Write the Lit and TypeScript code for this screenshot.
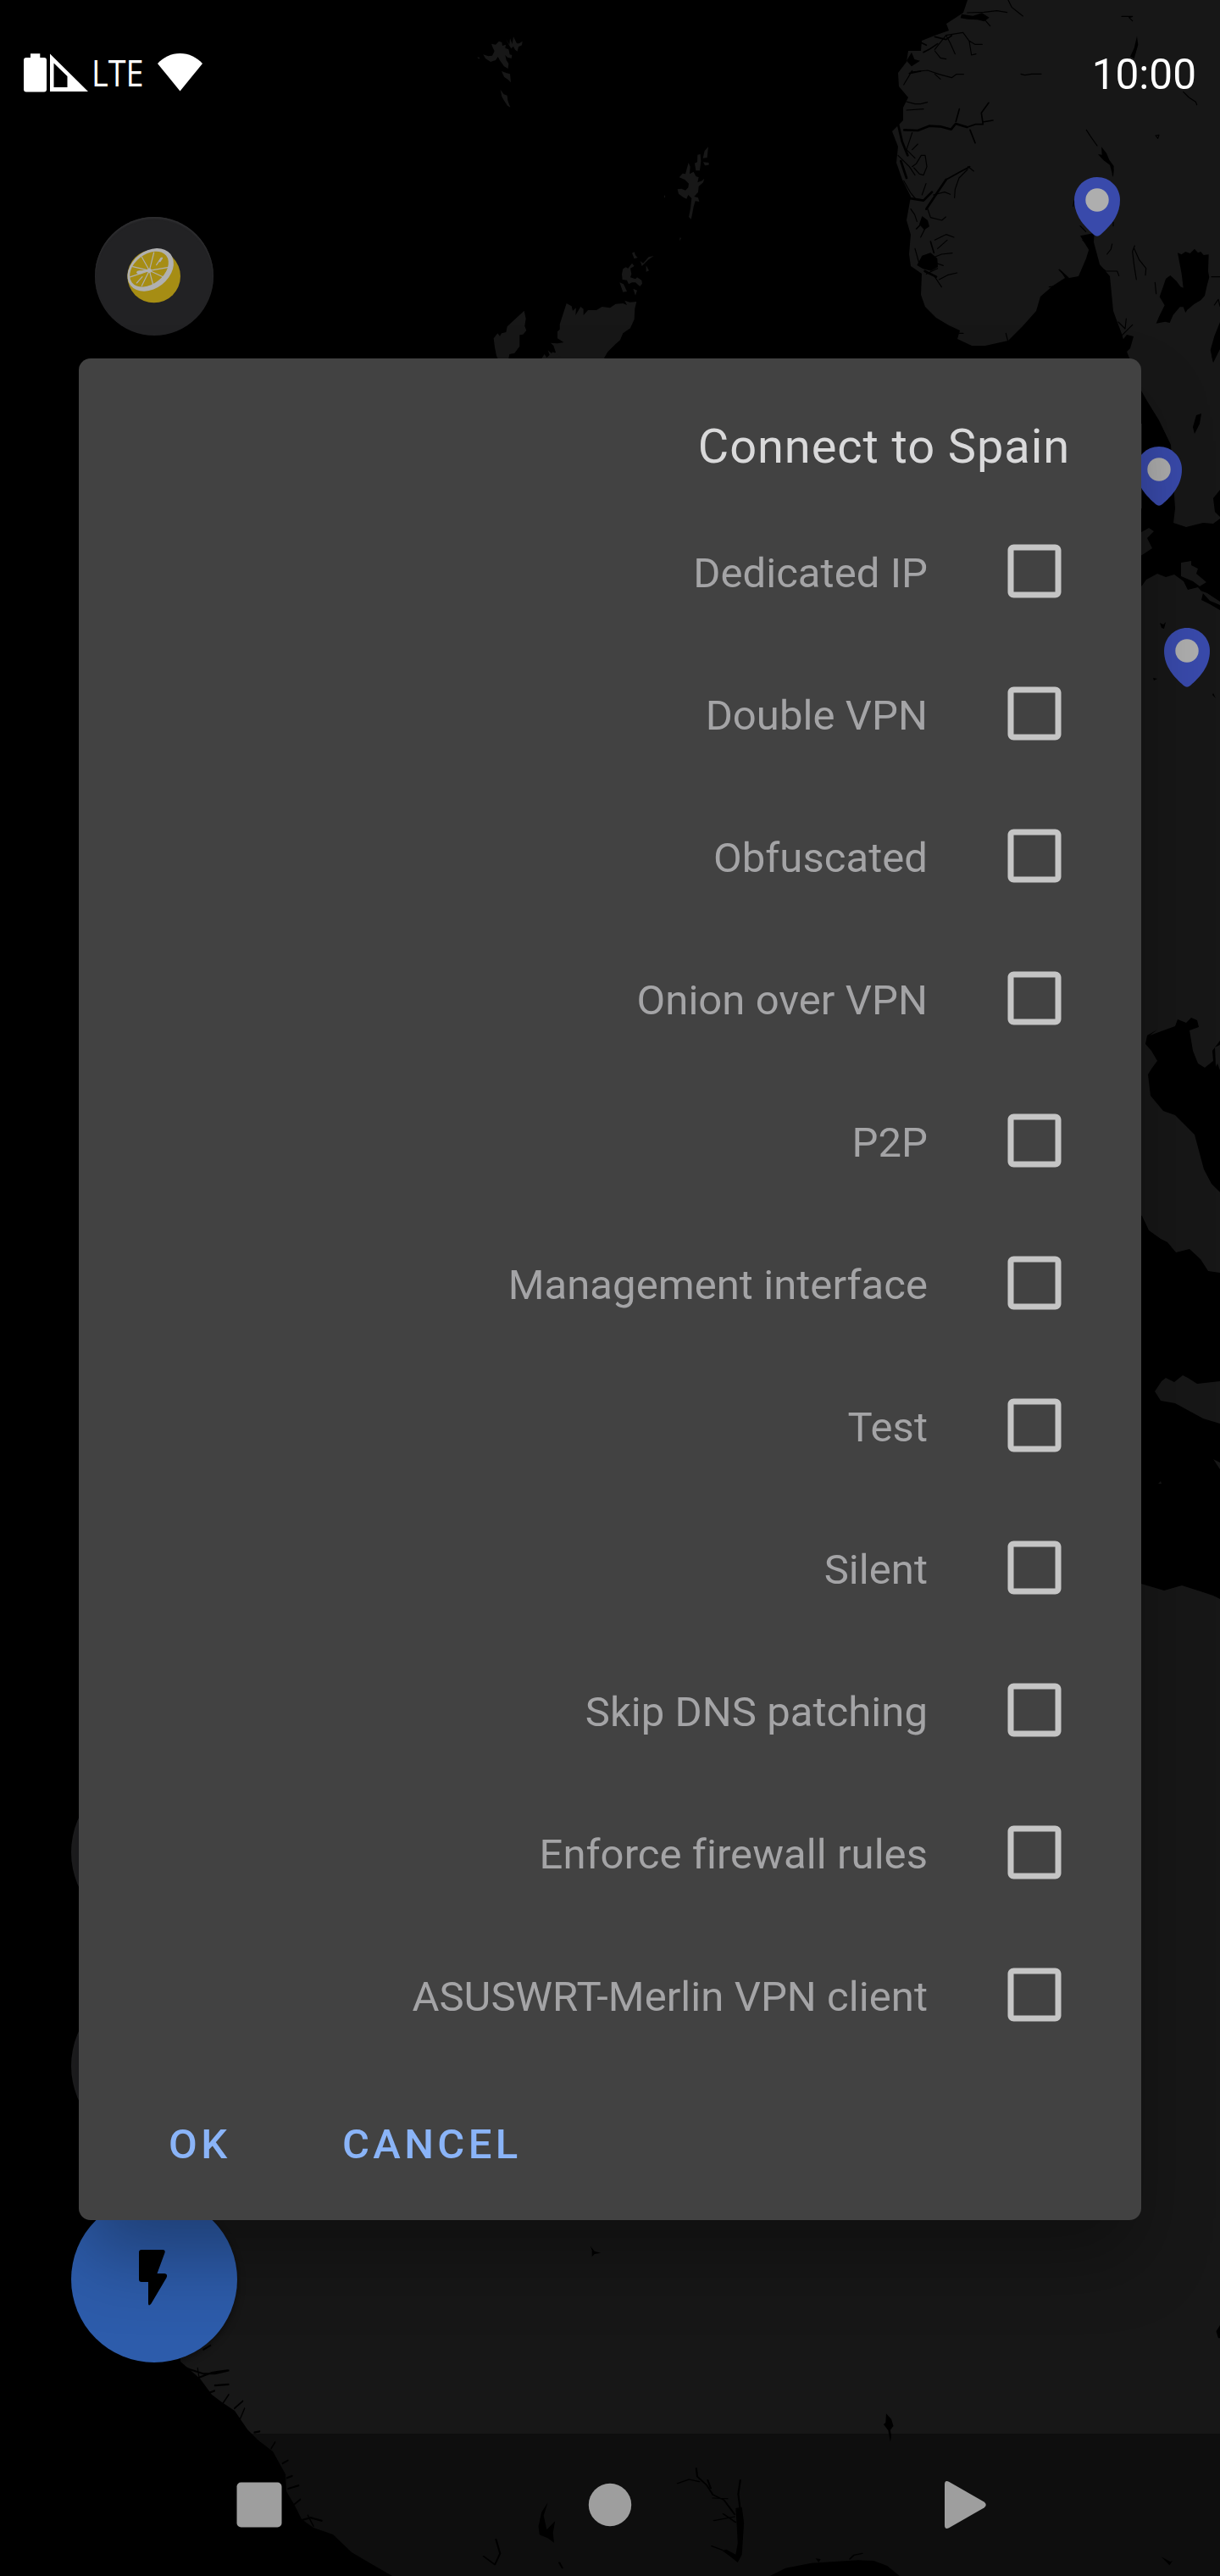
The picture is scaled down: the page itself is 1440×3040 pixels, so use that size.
import { LitElement, html, svg, css } from 'lit';
import { customElement, state } from 'lit/decorators.js';

interface Pin { x: number; y: number; }

const OPTIONS: string[] = [
  'Dedicated IP',
  'Double VPN',
  'Obfuscated',
  'Onion over VPN',
  'P2P',
  'Management interface',
  'Test',
  'Silent',
  'Skip DNS patching',
  'Enforce firewall rules',
  'ASUSWRT-Merlin VPN client',
];

// Pin positions: centre of the round head.
const PINS: Pin[] = [
  { x: 1295, y: 236 },
  { x: 1368, y: 554 },
  { x: 1401, y: 768 },
];

@customElement('world-map')
class WorldMap extends LitElement {
  static styles = css`
    :host { display: block; }
    .map { display: block; width: 1440px; height: 3040px; }
    .land { fill: #171717; }
    .sea { fill: #000; }
    .fjord { fill: none; stroke: #000; stroke-linecap: round; stroke-linejoin: round; }
    .pin { fill: #394aab; }
    .eye { fill: #aeaeae; }
  `;

  render() {
    return html`
      <svg class="map" viewBox="0 0 1440 3040">
        <g transform="translate(500 0) scale(.33333)">
          <path class="land" d="M240 155l15 3 12-12 10 4 2 12 12-4-2 12 12 5 4 18 8 2-2 12-14-4-8-8 4 18 8 12-2 18-14-8-14-20-8-14-8 12-18 6-18-12-8-14 18 6 14-2 8-16-6-12zM290 136l14 22 2-22 8 20 4-26 12 24 8 0 12-8-2 14-12 6-4 16-8-6-6-12-8 8-6-10zM190 202l9 2-4 5zM276 252l16 6 14 4 3 30-10-10-14-10zM272 318l12 16 12 4 2 18 9 24-10-6-12-18-8-14z" />
          <path class="land" d="M1008 520l-4 38-15 2 6-26zM970 548l10-2 2 24-4 34-14 0-4-26 9-4zM990 574l20 2 0 8-14 2zM938 576l6 14-2 26 14-8 8 16 10 4-4 18 16-6 8-8-4 14-16 14-2 20-14 16 14 4 4 14-14-2-6 20-6 32-3 12-8-8 6-30 4-36-12-12-6 14-12-6-16-12-4-16 14-2 14 6 10-10 2-14-14-14-20-8 12-14 10 2zM852 690l4 6-4 5zM908 840l4 4-6 9z" />
          <path class="land" d="M738 896l8-4 4 12 8 8-12 4zM815 906l-20 14-22 22-6-18 10 8 20-22zM788 940l10 18-10 4zM738 932l8 10-14 8 4 20-4 12 18 6 6-6 16 10 2 12-8 10-16-14-12 0-12 6-6-14-16-2-2-20 4-18 10-6 8 4zM694 1000l14 6 12 26-14 2zM742 1022l14 6-6 18z" />
          <path class="land" d="M506 1074l18 10 4 16 12-10-2 26 18-30 10 8 0 22 16-18 30 0 20-12 28 4 20-14 26-2 14 6-8-16 18 6 24-2-6 24-2 38-14 32-26 18-10 24-16 14-28 28-12 20 2 12-10 20-150 10-12-28-22-18-8-22 14 12 14-4-8-24-10-10 24 2 22-4-22-14 0-24 8-8 0-18z" />
          <path class="land" d="M356 1100l6 28-4 26 6 16-12 14-12 2 0 40-18 24-18 4-4 20-32 6-10-20-6-30-4-32 14-18 8 10 6-10 16-4 4-20zM410 1280l18-26 8 12 22-20 30 20 12 14z" />
        </g>
        <path class="land" d="M1142 0L1137 15 1117 28 1120 36 1103 42 1088 48 1087 60 1072 60 1070 73 1060 86 1061 102 1072 115 1066 127 1066 142 1053 155 1060 173 1058 192 1065 212 1075 232 1070 260 1075 277 1073 300 1075 314 1088 323 1087 348 1092 362 1105 375 1120 384 1133 390 1130 400 1147 408 1163 408 1190 402 1207 385 1223 367 1228 350 1243 337 1257 328 1250 317 1262 328 1273 326 1282 305 1286 292 1277 283 1290 282 1298 312 1310 326 1314 367 1324 394 1330 415 1336 430 1347 461 1355 475 1368 496 1382 525 1387 600 1385 617 1400 622 1420 617 1432 618 1440 612V0z" />
        <path class="land" d="M1340 500l8 0 0 100-8 0zM1340 632l16-9 6 4-8 8 6 12-12 8-8 3zM1394 664l12-2 0 5 8 4-2 6 12 10-8 5-8-6-14-6z" />
        <path class="land" d="M1336 700L1348 691 1353 684 1366 677 1376 681 1386 678 1397 686 1402 696 1414 693 1420 700 1418 708 1428 713 1440 720V1502L1426 1500 1417 1486 1404 1474 1388 1478 1378 1466 1370 1462 1356 1452 1348 1435 1336 1428z" />
        <path class="land" d="M1417 697l8 3 15 10v4l-12-5zM1363 1642l8-12 5-4 10 5 10-8 6 3 11 7 27-3v50l-20-6-33-18-17-3zM1432 1722l8 4v8zM1370 1748l-3 3 4 0z" />
        <path class="land" d="M1336 1864L1347 1869 1374 1877 1395 1871 1417 1878 1432 1883 1440 1887V3040H463L437 3025 415 3012 393 2991 370 2983 356 2973 348 2957 338 2940 337 2920 322 2893 305 2880 292 2867 277 2845 262 2835 250 2826 236 2807 213 2787 213 2620z" />
        <path class="sea" d="M1440 1228L1431 1240 1432 1252 1422 1260 1414 1255 1408 1240 1404 1216 1415 1212 1413 1204 1406 1201 1400 1207 1390 1203 1387 1211 1357 1222 1366 1215 1354 1222 1352 1232 1359 1240 1366 1252 1360 1260 1355 1268 1358 1293 1373 1311 1387 1316 1403 1332 1410 1339 1421 1380 1430 1397 1440 1407z" />
        <path class="land" d="M1434 1236l6-3v30l-3-8-2 4z" />
        <path class="sea" d="M1440 578l-8 10 2 16 6 6zM1354 606l12-4 5-10 7 5 8 4-3 10-14 8-17-5zM1430 420l8-20 2-4 0 16-8 16zM1322 405l8-10 8 2-4 14-8 8zM1412 490l6-2-2 12-6 12-2-8zM1369 735l4 2 3-3-2 8-3-1zM1361 800l5 1-4 2zM1432 818l3 6-4-4z" />
        <g transform="translate(960 0) scale(.33333)">
          <path class="sea" d="M1290 895l14 6 14-10 16 6 16-16 12 14 10-4 10 12 18-2-2 60 4 20-8 30-8 36-14 16-24 14-24 20-6 10-8-20-12 0-24 28-12 28-16-4-32 6 10-24 20-40-18-30 14-40 8-24 16-12 22 20 14 20 10 4-6-50zM525 50l40 6 32-10 26 16-18 14-24-6-34-2-26-4zM330 215l18-30 10 25 20 5-30 20zM1110 1200l16 8-12 10-16-4zM385 905l30-10 24 20 2 30-24 14-30-8-20-12zM385 765l20 15 6 22-18 12-18-20zM945 835l50-10-4 60 18 55 10 30-60-10 20-70zM1440 1140l-20 50-14 50 10 42 14-40 10-40zM1020 520l18 22 10 24 16 22-2 40-12-44-22-16-20-22 14 2zM1146 128l4 30-14 50-14-8 14-30z" />
          <path class="fjord" stroke-width="3.500" d="M690 0l12 25 40 32M545 45l60-2 45-5 36 6M600 62l26 30M430 175l40-50 60-10 22 30 8 50 16-4M552 145l20 12 26 0M470 125l14 26 18 40M430 180l20 25 20 4M345 255l60-6 40 14 45 12 16-12 26 0M320 300l30-50M430 262l20 18M330 360l30 8 20 0 24-6M330 390l60-4M500 700l2-30 14-40 30-30M350 590l14-10 18-30 14 0 6 40-12 30-14-4-20-22M300 550l40 40 20 30M320 640l24 42 20 24M385 690l14-40M425 690l40-10 20 8M345 740l14 20 8 24M405 740l10 30 40 10 14-12M400 800l-20 40M430 850l40-20 28 10M440 880l34-30M430 910l24-10 38-4M430 930l30 10M400 970l40-20M445 990l30-16 34-8M430 980l24 36M360 880l14 50M1010 940l26 20 40 0 6 16M1040 900l14-18 4-18M1062 800l0-14M945 800l20 20M1060 620l2-20M920 730l4-20M735 262l14 4 24-4 34 0M1310 325l20 20 24 16 4 10M1092 58l38 0-12 4 12 12M967 460l14 22 24 34M1212 480l12-2-4 12zM1138 870l-8 20 6 50 8 50M1136 880l18 40 24 30-2 24M1210 1000l4 40M1440 980l-30 0M1420 1080l14-20 6 24M1080 1140l24 24 4-36M1090 1190l40-40M870 955l20 20M835 1016l30-4M682 1180l6 24M505 1180l26 0M350 470l-20 60 30 30M370 510l-20 20M548 590l20 16" />
          <path class="fjord" stroke-width="8" d="M322 460l48 2 40-16 40 2 38 10 16-20 40 12M300 440l14 60 20 50M310 570l20 60M330 700l60 10 30-30M400 740l40-60 30-44M985 850l0 80M395 960l40 20" />
          <path class="fjord" stroke-width="5" d="M470 636l50-28 34-18M505 430l12-44M545 450l30-10 26 0-6-40 26-36M555 460l18 46M600 432l36-6M430 130l40 10 20-14M395 780l-30 30M380 150l20 10M390 185l20-10 30-20M340 260l40-8M415 855l12 40" />
        </g>
        <g transform="translate(0 2050) scale(.33333 .6313)">
          <path class="fjord" stroke-width="3.500" d="M720 1145l26-8M640 1210l60-12 50-10 56-4M660 1180l60 10 40 0 50-6M760 1212l50-2M650 1238l60-6 50-10M700 1180l14 50M790 1245l20-16M830 1255l30-14M850 1275l16-20M900 1300l20-2M960 1330l14-12M1000 1358l20-6M1015 1385l20-4M1020 1405l38-6M1040 1435l24-10M1060 1465l40-6 40 6M1090 1455l20 20" />
        </g>
        <g transform="translate(480 2580) scale(.6125 .33333)">
          <path class="sea" d="M700 1380l30-28 50-18 90-10 30 2 26 18 24 36zM354 212l8 18 12 6-12 4-5 10 0-24zM924 805l10 20 4 24-6 14 2 20-2 22-4-40-9-22 4-6zM1568 490l-8 24 4 24 4 0zM272 1120l-8 46 6 50 16-30-4 40 2 36-12-16-16-12-2-30 6-50zM634 1140l12-4 4 56-4 112-8 28-14-20-16-22 8-4 18 18 4-40-2-70zM788 1318l10 2-4 12zM1454 1312l18 18 4-4-6 16z" />
          <path class="fjord" stroke-width="3.500" d="M558 998l2 30 18 30 12 34 22 20 20 50M522 1052l22-14 20 8M580 1040l6 30M590 1104l28 2M643 1040l-4 50 4 60M592 1184l40-14M610 1160l24 30M588 1274l20 14M172 1250l8 50-10 40-22-30M294 1332l6 20M854 1320l8-14 16-6" />
        </g>
        ${PINS.map((p) => svg`
          <g transform="translate(${p.x} ${p.y})">
            <path class="pin" d="M0-27C15-27 27-15 27 0C27 19 15 31 4 41Q0 44.500-4 41C-15 31-27 19-27 0C-27-15-15-27 0-27z"/>
            <circle class="eye" r="13.700"/>
          </g>`)}
      </svg>`;
  }
}

@customElement('status-bar')
class StatusBar extends LitElement {
  static styles = css`
    :host {
      display: flex; justify-content: space-between; box-sizing: border-box;
      height: 168px; padding: 58px 28px 0; color: #fff;
      font-family: Roboto, sans-serif;
    }
    .icons { display: flex; align-items: flex-start; }
    .glyph { display: block; fill: #fff; height: 58px; }
    .network {
      font: 400 43.500px/58px 'Open Sans', sans-serif; width: 65px; margin-left: 2px; margin-top: -1px;
      white-space: nowrap; transform: scaleX(.87); transform-origin: 0 50%;
    }
    .clock { font-size: 49.500px; line-height: 58px; margin-top: 1px; }
  `;

  render() {
    return html`
      <div class="icons">
        <svg class="glyph" width="78" viewBox="28 58 78 58">
          <path d="M36 63.300h11.300v4.700H52q3 0 3 3v34.500q0 3-3 3H31q-3 0-3-3V71q0-3 3-3h5z" />
          <path fill-rule="evenodd" d="M59 63.500L104 108H59zM63.500 74.500V103H79.500V90z" />
        </svg>
        <span class="network">LTE</span>
        <svg class="glyph" width="68" viewBox="173 58 68 58">
          <path d="M212.500 107.500L186 75C193 67.500 202 63 212.500 63S232 67.500 239 75z" />
        </svg>
      </div>
      <span class="clock">10:00</span>`;
  }
}

@customElement('connect-dialog')
class ConnectDialog extends LitElement {
  static styles = css`
    :host {
      display: flex; flex-direction: column; box-sizing: border-box;
      width: 1254px; height: 2197px; border-radius: 14px; background: #424242;
      font-family: Roboto, sans-serif;
      box-shadow: 0 48px 90px -6px rgba(0, 0, 0, .32);
    }
    .title {
      height: 167px; box-sizing: border-box; margin: 0; padding: 71px 84px 0;
      text-align: right; font-weight: 400; font-size: 56px; line-height: 66px;
      letter-spacing: .900px; color: #d9d9da;
    }
    .row {
      display: flex; align-items: center; justify-content: flex-end; gap: 84px;
      height: 168px; padding-right: 84px; color: #a4a4a6; font-size: 49px; cursor: pointer;
    }
    .label { line-height: 58px; padding-top: 6px; white-space: nowrap; letter-spacing: .060px; }
    .box { display: block; width: 84px; height: 84px; fill: #c5c5c5; }
    .actions { display: flex; padding: 64px 0 0 106px; gap: 131.500px; }
    .action {
      border: 0; background: none; margin: 0; padding: 0; color: #8ab4f8;
      font: 500 49px/58px Roboto, sans-serif; letter-spacing: 4.375px;
    }
  `;

  @state() private checked = new Set<number>();

  private toggle(i: number) {
    const next = new Set(this.checked);
    if (!next.delete(i)) next.add(i);
    this.checked = next;
  }

  render() {
    return html`
      <h2 class="title">Connect to Spain</h2>
      ${OPTIONS.map((label, i) => html`
        <div class="row" role="checkbox" aria-checked=${this.checked.has(i)} @click=${() => this.toggle(i)}>
          <span class="label">${label}</span>
          <svg class="box" viewBox="0 0 24 24">
            ${this.checked.has(i)
              ? svg`<path d="M19 3H5c-1.110 0-2 .9-2 2v14c0 1.100.890 2 2 2h14c1.110 0 2-.9 2-2V5c0-1.100-.890-2-2-2zm-9 14l-5-5 1.410-1.410L10 14.170l7.590-7.590L19 8l-9 9z"/>`
              : svg`<path d="M19 5v14H5V5h14m0-2H5c-1.100 0-2 .9-2 2v14c0 1.100.9 2 2 2h14c1.100 0 2-.9 2-2V5c0-1.100-.9-2-2-2z"/>`}
          </svg>
        </div>`)}
      <div class="actions">
        <button class="action">OK</button>
        <button class="action">CANCEL</button>
      </div>`;
  }
}

@customElement('nav-bar')
class NavBar extends LitElement {
  static styles = css`
    :host {
      display: flex; align-items: center; justify-content: space-between; box-sizing: border-box;
      height: 168px; padding: 0 264px; background: rgba(0, 0, 0, .38);
    }
    .key { display: block; width: 84px; height: 84px; fill: #9e9e9e; }
  `;

  render() {
    return html`
      <svg class="key" viewBox="0 0 84 84"><rect x="15.500" y="15.500" width="53" height="53" rx="5" /></svg>
      <svg class="key" viewBox="0 0 84 84"><circle cx="42" cy="42" r="25.200" /></svg>
      <svg class="key" viewBox="0 0 84 84"><path d="M23 18Q23 12.500 28 14.800L69.500 38.500Q74 42 69.500 45.500L28 69.200Q23 71.500 23 66z" /></svg>`;
  }
}

@customElement('app-root')
class AppRoot extends LitElement {
  static styles = css`
    :host {
      display: block; position: relative; width: 1440px; height: 3040px;
      overflow: hidden; background: #000;
    }
    .backdrop { position: absolute; inset: 0; }
    .fab { position: absolute; left: 84px; width: 196px; height: 196px; border-radius: 50%; background: #1f1f21; }
    .country {
      left: 112px; top: 256px; width: 140px; height: 140px; background: #222224;
      box-shadow: inset 0 2px 2px #2f2f31;
    }
    .upper { top: 2088px; }
    .lower { top: 2340px; }
    .quick { top: 2592px; background: #2d5cab; box-shadow: 0 4px 10px rgba(0, 0, 0, .4); }
    .art { display: block; width: 100%; height: 100%; }
    .rind { fill: #a68d14; }
    .pith { fill: #b0b0b0; }
    .vein { fill: none; stroke: #b0b0b0; stroke-width: 3.500; stroke-linecap: round; }
    .shine { stroke-width: 7; }
    .screen { position: relative; display: flex; flex-direction: column; height: 3040px; }
    .main { flex: 1; padding: 255px 0 0 93px; }
  `;

  render() {
    return html`
      <div class="backdrop">
        <world-map></world-map>
        <div class="fab country">
          <svg class="art" viewBox="0 0 420 420">
            <g transform="translate(84 84)">
              <circle class="rind" cx="125" cy="126" r="94" />
              <ellipse class="pith" cx="113" cy="103" rx="90" ry="66" transform="rotate(-38 113 103)" />
              <ellipse class="rind" cx="108" cy="101" rx="77" ry="52" transform="rotate(-38 108 101)" />
              <circle class="pith" cx="109" cy="106" r="8" />
              <ellipse class="pith" cx="75" cy="112" rx="11" ry="6" />
              <path class="vein" d="M109 106L125 42M109 106L82 58M109 106L50 92M109 106L36 130M84 128L64 150M109 106L82 160M109 106L122 156M109 106L160 130M109 106L178 94M134 86L150 62" />
              <path class="vein shine" d="M146 72L153 62M68 112L109 104" />
            </g>
          </svg>
        </div>
        <div class="fab upper"></div>
        <div class="fab lower"></div>
        <div class="fab quick">
          <svg class="art" viewBox="84 2592 196 196">
            <path d="M167 2655H192Q195.500 2655 194.500 2658.500L185.500 2683H194Q198.500 2683.500 196.500 2688L178.500 2718.500Q175 2722.500 175 2718V2693H167Q164 2693 164 2690V2658Q164 2655 167 2655z" />
          </svg>
        </div>
      </div>
      <div class="screen">
        <status-bar></status-bar>
        <div class="main"><connect-dialog></connect-dialog></div>
        <nav-bar></nav-bar>
      </div>`;
  }
}
